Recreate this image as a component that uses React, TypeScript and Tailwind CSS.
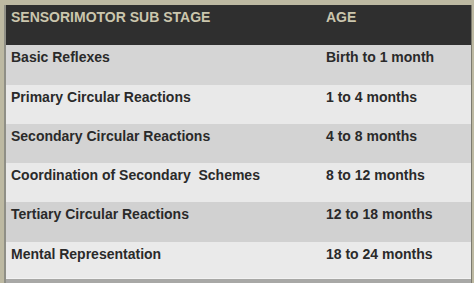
const rows = [
  { stage: 'Basic Reflexes', age: 'Birth to 1 month', bg: 'bg-[#d5d5d5]', h: 'h-[40px]' },
  { stage: 'Primary Circular Reactions', age: '1 to 4 months', bg: 'bg-[#e9e9e9]', h: 'h-[39px]' },
  { stage: 'Secondary Circular Reactions', age: '4 to 8 months', bg: 'bg-[#d3d3d3]', h: 'h-[39px]' },
  { stage: 'Coordination of Secondary  Schemes', age: '8 to 12 months', bg: 'bg-[#e9e9e9]', h: 'h-[39px]' },
  { stage: 'Tertiary Circular Reactions', age: '12 to 18 months', bg: 'bg-[#d1d1d1]', h: 'h-[40px]' },
  { stage: 'Mental Representation', age: '18 to 24 months', bg: 'bg-[#eaeaea]', h: 'h-[36px]' },
];

export default function App() {
  return (
    <div className="w-[474px] h-[283px] overflow-hidden bg-[#bdb9a2] pt-[5px] pl-[4px] pr-[3px] font-['Liberation_Sans',Arial,sans-serif] font-bold text-[14px] leading-[16px]">
      <div className="border-l-2 border-[#8f8f86] shadow-[1px_0_0_#7d7b70]">
        <div className="grid grid-cols-[320px_1fr] h-[40px] bg-[#2f2f2f] text-[#cbc6ad] pt-[4px]">
          <div className="pl-[5px]">SENSORIMOTOR SUB STAGE</div>
          <div>AGE</div>
        </div>
        {rows.map((r) => (
          <div key={r.stage} className={`grid grid-cols-[320px_1fr] ${r.h} ${r.bg} text-[#2a2a2a] pt-[4px]`}>
            <div className="pl-[5px] whitespace-pre">{r.stage}</div>
            <div>{r.age}</div>
          </div>
        ))}
        <div className="h-[5px] bg-[#a8a8a6] border-t border-[#f2f2f2]" />
      </div>
    </div>
  );
}
